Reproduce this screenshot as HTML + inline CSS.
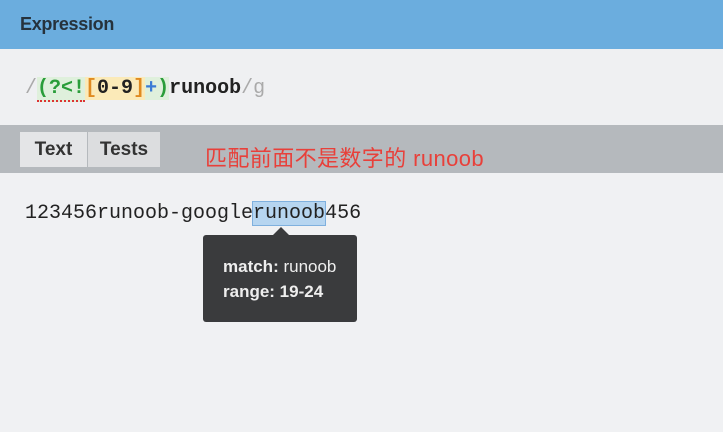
<!DOCTYPE html>
<html><head><meta charset="utf-8"><style>
body{margin:0;width:723px;height:432px;background:#f0f1f3;font-family:"Liberation Sans",sans-serif;position:relative;overflow:hidden}
.hd{position:absolute;left:0;top:0;width:723px;height:49px;background:#6badde;}
.hd span{position:absolute;left:20px;top:14px;font-size:18px;font-weight:bold;color:#26323c;letter-spacing:-0.3px}
.ex{position:absolute;left:0;top:49px;width:723px;height:76px;background:#eff0f2}
.mono{font-family:"Liberation Mono","DejaVu Sans Mono",monospace;font-size:20px;white-space:pre}
.re{position:absolute;left:25px;top:77px;font-weight:bold;color:#222}
.bar{position:absolute;left:0;top:125px;width:723px;height:48px;background:#b5b9bd}
.tab{position:absolute;top:132px;height:35px;background:#e4e5e7;font-size:19px;font-weight:bold;color:#333;line-height:35px;text-align:center}
.red{position:absolute;left:205px;top:141px;font-size:22px;letter-spacing:0.4px;color:#e8403a;font-family:"Liberation Sans","Noto Sans CJK SC",sans-serif}
.txt{position:absolute;left:25px;top:202px;color:#222}
.hl{background:#b6d5f0;outline:1px solid #7fb0de}
.tip{position:absolute;left:203px;top:235px;width:154px;height:87px;background:#3a3b3d;border-radius:3px;color:#eee;font-size:17px}
.tip:before{content:"";position:absolute;left:70px;top:-8px;border:8px solid transparent;border-top:0;border-bottom-color:#3a3b3d}
</style></head><body>
<div class="hd"><span>Expression</span></div>
<div class="ex"></div>
<div class="re mono"><span style="color:#aaa;font-weight:normal">/</span><span style="background:#dff0dc;color:#2a9d3a;border-bottom:2px dotted #d33">(?&lt;!</span><span style="background:#fbeab8"><span style="color:#e08a20">[</span>0-9<span style="color:#e08a20">]</span></span><span style="background:#dff0dc"><span style="color:#3a7bd5">+</span><span style="color:#2a9d3a">)</span></span>runoob<span style="color:#aaa;font-weight:normal">/g</span></div>
<div class="bar"></div>
<div class="tab" style="left:20px;width:67px">Text</div>
<div class="tab" style="left:88px;width:72px;background:#dcdddf">Tests</div>
<div class="red">匹配前面不是数字的 runoob</div>
<div class="txt mono">123456runoob-google<span class="hl">runoob</span>456</div>
<div class="tip">
<div style="position:absolute;left:20px;top:22px"><b>match:</b> runoob</div>
<div style="position:absolute;left:20px;top:47px"><b>range: 19-24</b></div>
</div>
</body></html>
